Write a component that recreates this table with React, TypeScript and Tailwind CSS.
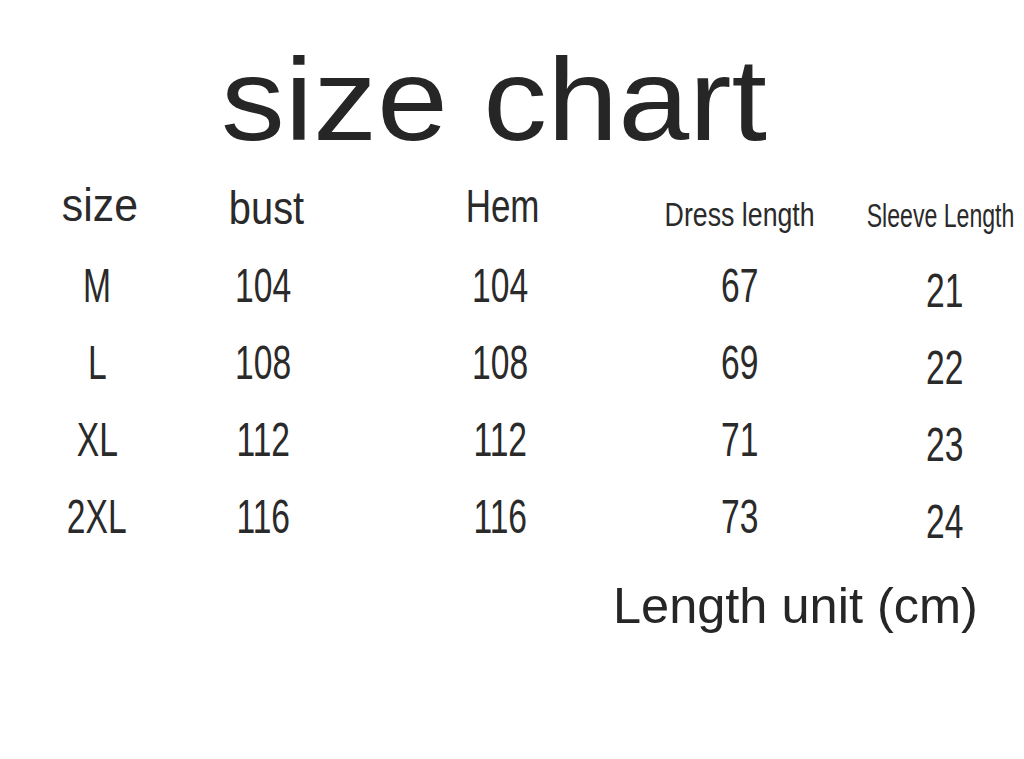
import React from "react";

const rows = [
  ["M", "104", "104", "67", "21"],
  ["L", "108", "108", "69", "22"],
  ["XL", "112", "112", "71", "23"],
  ["2XL", "116", "116", "73", "24"],
];

const font = { fontFamily: '"Liberation Sans", Arial, sans-serif' };

export default function App() {
  return (
    <div className="w-[1024px] h-[759px] bg-white text-[#262626] overflow-hidden" style={font}>
      <div className="pt-[42px] pl-[221px]">
        <div className="inline-block origin-left scale-x-[1.1] text-[116px] leading-none whitespace-nowrap">size chart</div>
      </div>

      <div className="mt-[24px] pl-[58px]">
        <div className="grid grid-cols-[78px_254px_220px_260px_150px] h-[80px] items-start text-[#2a2a2a]">
          <div className="flex justify-center">
            <span className="inline-block text-[46px] leading-none whitespace-nowrap scale-x-[0.93] translate-x-[3px]">size</span>
          </div>
          <div className="flex justify-center mt-[3px]">
            <span className="inline-block text-[46px] leading-none whitespace-nowrap scale-x-[0.865] translate-x-[3px]">bust</span>
          </div>
          <div className="flex justify-center mt-[1px]">
            <span className="inline-block text-[46px] leading-none whitespace-nowrap scale-x-[0.76] translate-x-[3px]">Hem</span>
          </div>
          <div className="flex justify-center mt-[16px]">
            <span className="inline-block text-[33px] leading-none whitespace-nowrap scale-x-[0.81]">Dress length</span>
          </div>
          <div className="flex justify-center mt-[17px]">
            <span className="inline-block text-[33px] leading-none whitespace-nowrap scale-x-[0.7] -translate-x-[5px]">Sleeve Length</span>
          </div>
        </div>

        {rows.map((r) => (
          <div key={r[0]} className="grid grid-cols-[78px_254px_220px_260px_150px] h-[77px] items-start text-[#2a2a2a]">
            {r.map((c, i) => (
              <div key={i} className={i === 4 ? "flex justify-center mt-[5px]" : "flex justify-center"}>
                <span className="inline-block text-[48px] leading-none whitespace-nowrap scale-x-[0.7]">{c}</span>
              </div>
            ))}
          </div>
        ))}
      </div>

      <div className="mt-[11px] pl-[613px]">
        <div className="text-[50.5px] leading-none whitespace-nowrap">Length unit (cm)</div>
      </div>
    </div>
  );
}
